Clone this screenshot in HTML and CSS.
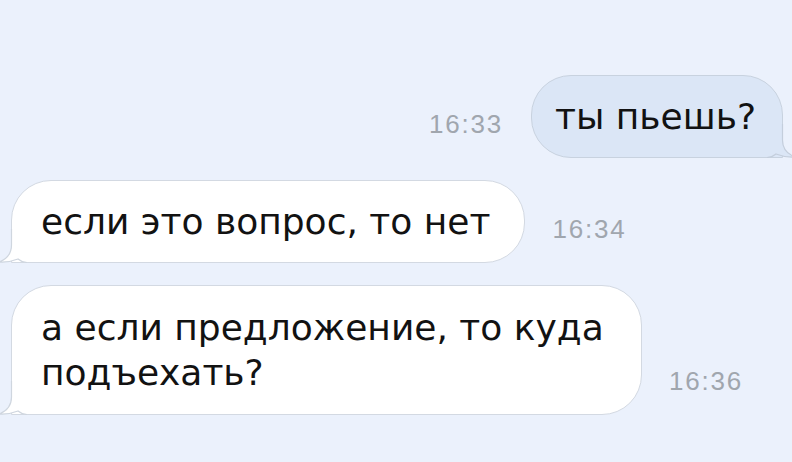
FILE: index.html
```html
<!DOCTYPE html>
<html lang="ru">
<head>
    <meta charset="UTF-8">
    <title>Чат</title>
    <link rel="stylesheet" href="styles.css">
</head>
<body>
<div class="chat">
    <div class="row row-out">
        <span class="time time-out">16:33</span>
        <div class="bubble bubble-out">
            ты пьешь?
            <svg class="tail tail-out" width="31" height="34" viewBox="0 0 31 34">
                <path class="tail-fill" d="M15.5,0 L15.5,16 C15.5,25 11,30 3,33 C10,33.5 17,32 22,30 C25,32.5 28,33.5 31,33.5 L31,0 Z"/>
                <path class="tail-line" d="M15.5,0 L15.5,16 C15.5,25 11,30 3,33 C10,33.5 17,32 22,30 C25,32.5 28,33.5 31,33.5"/>
            </svg>
        </div>
    </div>
    <div class="row row-in">
        <div class="bubble bubble-in">
            если это вопрос, то нет
            <svg class="tail tail-in" width="31" height="34" viewBox="0 0 31 34">
                <path class="tail-fill" d="M15.5,0 L15.5,16 C15.5,25 11,30 3,33 C10,33.5 17,32 22,30 C25,32.5 28,33.5 31,33.5 L31,0 Z"/>
                <path class="tail-line" d="M15.5,0 L15.5,16 C15.5,25 11,30 3,33 C10,33.5 17,32 22,30 C25,32.5 28,33.5 31,33.5"/>
            </svg>
        </div>
        <span class="time">16:34</span>
    </div>
    <div class="row row-in">
        <div class="bubble bubble-in bubble-wide">
            а если предложение, то куда подъехать?
            <svg class="tail tail-in" width="31" height="34" viewBox="0 0 31 34">
                <path class="tail-fill" d="M15.5,0 L15.5,16 C15.5,25 11,30 3,33 C10,33.5 17,32 22,30 C25,32.5 28,33.5 31,33.5 L31,0 Z"/>
                <path class="tail-line" d="M15.5,0 L15.5,16 C15.5,25 11,30 3,33 C10,33.5 17,32 22,30 C25,32.5 28,33.5 31,33.5"/>
            </svg>
        </div>
        <span class="time">16:36</span>
    </div>
</div>
</body>
</html>
```

FILE: styles.css
```css
html, body {
    margin: 0;
    padding: 0;
    background: #ebf1fc;
}

body {
    width: 792px;
    height: 462px;
    overflow: hidden;
    font-family: "DejaVu Sans", "Liberation Sans", sans-serif;
}

.chat {
    padding: 75px 9px 0 11px;
    display: flex;
    flex-direction: column;
    gap: 22px;
}

.row {
    display: flex;
    align-items: flex-end;
}

.row-out {
    justify-content: flex-end;
}

.bubble {
    position: relative;
    padding: 18px 34px 18px 29px;
    font-size: 36px;
    line-height: 45px;
    color: #121212;
    border: 1px solid #d3d9e2;
    border-radius: 40px;
}

.bubble-out {
    padding: 18px 26px 18px 23px;
    background: #dbe6f6;
    border-color: #c8d2df;
    border-bottom-right-radius: 0;
}

.bubble-in {
    background: #ffffff;
    border-bottom-left-radius: 0;
}

.bubble-wide {
    width: 566px;
    padding-top: 19px;
    padding-bottom: 19px;
}

.tail {
    position: absolute;
    bottom: -1px;
    display: block;
}

.tail-in {
    left: -16px;
}

.tail-out {
    right: -16px;
    transform: scaleX(-1);
}

.tail-fill {
    stroke: none;
}

.tail-in .tail-fill {
    fill: #ffffff;
}

.tail-out .tail-fill {
    fill: #dbe6f6;
}

.tail-line {
    fill: none;
    stroke: #cfd6df;
    stroke-width: 1.2;
}

.tail-out .tail-line {
    stroke: #c4cedc;
}

.time {
    font-family: "Liberation Sans", Arial, sans-serif;
    font-size: 26px;
    line-height: 26px;
    letter-spacing: 1.8px;
    color: #a0a6ae;
    margin: 0 0 21px 27px;
}

.time-out {
    margin: 0 28px 21px 0;
}
```
